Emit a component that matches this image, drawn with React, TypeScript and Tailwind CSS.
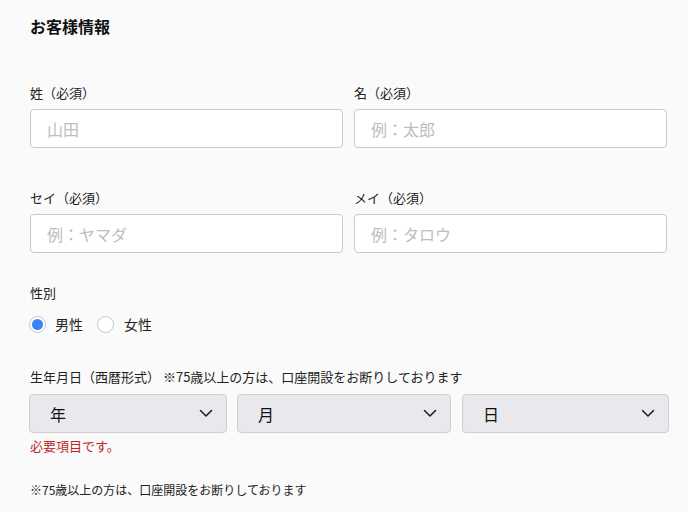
import React from "react";

const font = { fontFamily: '"Noto Sans CJK JP", "Noto Sans", sans-serif' };

function Chevron() {
  return (
    <svg width="14" height="9" viewBox="0 0 14 9" className="shrink-0">
      <polyline points="1.5,1.5 7,7 12.5,1.5" fill="none" stroke="#222" strokeWidth="1.6" strokeLinecap="round" strokeLinejoin="round" />
    </svg>
  );
}

function Field({ label, placeholder }: { label: string; placeholder: string }) {
  return (
    <div className="w-[313px]">
      <div className="text-[13px] leading-[20px] text-[#222]">{label}</div>
      <input
        placeholder={placeholder}
        className="mt-[6px] h-[39px] w-full rounded-[4px] border border-[#c9c9c9] bg-white px-[16px] text-[16px] text-[#222] outline-none placeholder:text-[#bdbdbd]"
        style={font}
      />
    </div>
  );
}

function Sel({ w, text }: { w: string; text: string }) {
  return (
    <div className={`${w} flex h-[39px] items-center justify-between rounded-[4px] border border-[#cfcfd4] bg-[#e9e9ed] pl-[20px] pr-[13px] text-[16px] text-[#111]`}>
      <span>{text}</span>
      <Chevron />
    </div>
  );
}

export default function App() {
  return (
    <div className="min-h-[512px] w-[688px] bg-[#fafafa] pl-[30px] pt-[14px] text-[#222]" style={font}>
      <div className="text-[16px] font-bold leading-[24px] text-[#111]">お客様情報</div>

      <div className="mt-[45px] flex gap-[11px]">
        <Field label="姓（必須）" placeholder="山田" />
        <Field label="名（必須）" placeholder="例：太郎" />
      </div>

      <div className="mt-[40px] flex gap-[11px]">
        <Field label="セイ（必須）" placeholder="例：ヤマダ" />
        <Field label="メイ（必須）" placeholder="例：タロウ" />
      </div>

      <div className="mt-[30px] text-[13px] leading-[20px]">性別</div>
      <div className="mt-[11px] flex h-[20px] items-center text-[14px] -ml-[1px]">
        <span className="flex h-[17px] w-[17px] items-center justify-center rounded-full border border-[#c6c6c6] bg-white">
          <span className="h-[11px] w-[11px] rounded-full bg-[#3b82f6]" />
        </span>
        <span className="ml-[9px]">男性</span>
        <span className="ml-[14px] h-[17px] w-[17px] rounded-full border border-[#c6c6c6] bg-white" />
        <span className="ml-[10px]">女性</span>
      </div>

      <div className="mt-[33px] text-[13px] leading-[20px]">生年月日（西暦形式） ※75歳以上の方は、口座開設をお断りしております</div>
      <div className="mt-[7px] -ml-[1px] flex">
        <Sel w="w-[198px]" text="年" />
        <div className="ml-[10px]"><Sel w="w-[214px]" text="月" /></div>
        <div className="ml-[11px]"><Sel w="w-[207px]" text="日" /></div>
      </div>
      <div className="mt-[3px] text-[13px] leading-[20px] text-[#c0272d]">必要項目です。</div>

      <div className="mt-[25px] text-[12px] leading-[18px]">※75歳以上の方は、口座開設をお断りしております</div>
    </div>
  );
}
